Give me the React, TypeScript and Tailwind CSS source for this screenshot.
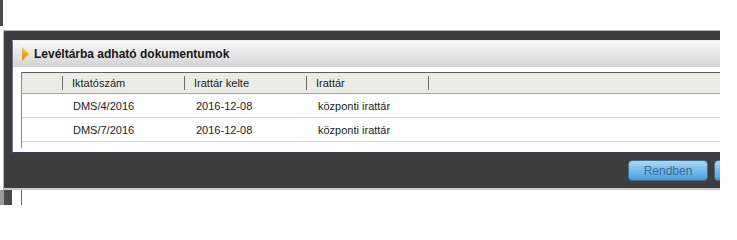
import React from "react";

const columns = ["Iktatószám", "Irattár kelte", "Irattár"];

const rows = [
  { id: "DMS/4/2016", date: "2016-12-08", place: "központi irattár" },
  { id: "DMS/7/2016", date: "2016-12-08", place: "központi irattár" },
];

export default function App() {
  return (
    <div className="relative w-[737px] h-[205px] overflow-hidden bg-white font-['Liberation_Sans',Arial,sans-serif]">
      {/* page behind the dialog */}
      <div className="absolute left-0 top-0 w-[3px] h-[26px] bg-[#4a4a4a]" />
      <div className="absolute left-0 top-[190px] w-[4px] h-[15px] bg-[#9a9a9a]" />
      <div className="absolute left-[4px] top-[190px] w-[8px] h-[15px] bg-[#4a4a4a]" />
      <div className="absolute left-[21px] top-[190px] w-px h-[15px] bg-[#6a6a6a]" />

      {/* dialog (clipped on the right) */}
      <div className="absolute left-[3px] top-[30px] w-[717px] h-[160px] flex flex-col overflow-hidden bg-[#3d3d3d] border-t border-l border-[#b8b8b8]">
        <div className="h-[9px]" />
        <div className="ml-[8px] flex flex-col bg-white border-t border-l border-t-[#e8eef8] border-l-[#6f7590] border-b border-b-[#3a3a62] h-[113px]">
          {/* header */}
          <div className="h-[26px] flex items-center pl-[9px] gap-[4px] bg-gradient-to-b from-[#f9f9f9] to-[#d3d3d3]">
            <svg width="8" height="14" viewBox="0 0 8 14">
              <defs>
                <linearGradient id="tri" x1="0" y1="0" x2="0" y2="1">
                  <stop offset="0" stopColor="#f9c640" />
                  <stop offset="1" stopColor="#ea8a00" />
                </linearGradient>
              </defs>
              <polygon points="0,0 7,7 0,14" fill="url(#tri)" />
            </svg>
            <span className="text-[12px] font-bold text-[#161616] leading-none">
              Levéltárba adható dokumentumok
            </span>
          </div>

          {/* table */}
          <div className="mt-[5px] ml-[8px] flex-1 border-l border-[#8a8a8a] mb-[4px]">
            <div className="h-[22px] flex items-center bg-[#ecece6] border-t border-t-[#5a6068] border-b border-b-[#a9a9a9] text-[11px] text-[#1c1c1c]">
              <div className="w-[40px] shrink-0" />
              {columns.map((c) => (
                <div key={c} className="w-[122px] shrink-0 flex items-center h-full">
                  <div className="w-px h-[14px] bg-[#6d6d6d]" />
                  <span className="pl-[9px]">{c}</span>
                </div>
              ))}
              <div className="w-px h-[14px] bg-[#6d6d6d]" />
            </div>
            {rows.map((r) => (
              <div
                key={r.id}
                className="h-[24px] flex items-center border-b border-[#d6d6d6] text-[11px] text-[#1c1c1c]"
              >
                <div className="w-[41px] shrink-0" />
                <div className="w-[122px] shrink-0 pl-[10px] pt-px">{r.id}</div>
                <div className="w-[122px] shrink-0 pl-[11px] pt-px">{r.date}</div>
                <div className="w-[122px] shrink-0 pl-[11px] pt-px">{r.place}</div>
              </div>
            ))}
          </div>
        </div>

        {/* footer */}
        <div className="flex-1 flex items-start gap-[6px] pt-[7px] pl-[624px] border-b-2 border-[#c9c9c9]">
          <button className="w-[80px] h-[21px] shrink-0 rounded-[4px] border border-[#3b6f96] bg-gradient-to-b from-[#a8d9f7] to-[#45a0de] text-[12px] text-[#3c6891] leading-none">
            Rendben
          </button>
          {/* second button, cut off by the window edge */}
          <button className="w-[80px] h-[21px] shrink-0 rounded-[4px] border border-[#3b6f96] bg-gradient-to-b from-[#a8d9f7] to-[#45a0de]" />
        </div>
      </div>
    </div>
  );
}
